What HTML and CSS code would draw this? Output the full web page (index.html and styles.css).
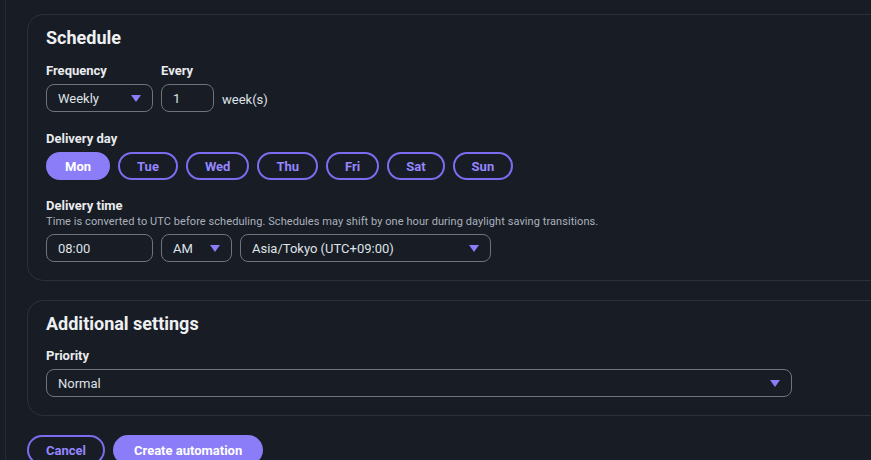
FILE: index.html
```html
<!DOCTYPE html>
<html lang="en">
<head>
<meta charset="utf-8">
<title>Create automation</title>
<link rel="stylesheet" href="styles.css">
</head>
<body>
<div class="shell">
  <main class="content">
    <section class="card">
      <h2 class="card-title">Schedule</h2>
      <div class="row">
        <div class="field">
          <label class="label">Frequency</label>
          <div class="select w-freq"><span>Weekly</span><span class="caret"></span></div>
        </div>
        <div class="field">
          <label class="label">Every</label>
          <div class="inline">
            <div class="input w-every">1</div>
            <span class="unit">week(s)</span>
          </div>
        </div>
      </div>

      <div class="field gap-day">
        <label class="label">Delivery day</label>
        <div class="days">
          <button class="day active">Mon</button>
          <button class="day">Tue</button>
          <button class="day">Wed</button>
          <button class="day">Thu</button>
          <button class="day">Fri</button>
          <button class="day">Sat</button>
          <button class="day">Sun</button>
        </div>
      </div>

      <div class="field gap-time">
        <label class="label">Delivery time</label>
        <p class="desc">Time is converted to UTC before scheduling. Schedules may shift by one hour during daylight saving transitions.</p>
        <div class="row">
          <div class="input w-time">08:00</div>
          <div class="select w-ampm"><span>AM</span><span class="caret"></span></div>
          <div class="select w-tz"><span>Asia/Tokyo (UTC+09:00)</span><span class="caret"></span></div>
        </div>
      </div>
    </section>

    <section class="card">
      <h2 class="card-title compact">Additional settings</h2>
      <div class="field">
        <label class="label">Priority</label>
        <div class="select w-priority"><span>Normal</span><span class="caret"></span></div>
      </div>
    </section>

    <div class="actions">
      <button class="btn btn-outline">Cancel</button>
      <button class="btn btn-primary">Create automation</button>
    </div>
  </main>
</div>
</body>
</html>
```

FILE: styles.css
```css
* { box-sizing: border-box; }

html, body {
  margin: 0;
  height: 100%;
  overflow: hidden;
}

body {
  background: #181c25;
  color: #e9ebed;
  font-family: Roboto, "Open Sans", sans-serif;
}

.shell {
  padding-left: 5px;
  height: 100%;
}

.content {
  border-left: 1px solid #252a34;
  height: 100%;
  padding: 14px 0 0 21px;
  width: 960px;
}

.card {
  border: 1px solid #2c303a;
  border-radius: 16px;
  padding: 11px 18px 18px;
  margin-bottom: 19px;
}

.card-title {
  margin: 0 0 12px;
  font-size: 18px;
  line-height: 24px;
  font-weight: 700;
  color: #eef0f2;
}

.card-title.compact { margin-bottom: 11px; }

.row {
  display: flex;
  gap: 8px;
  align-items: center;
}

.field {
  display: flex;
  flex-direction: column;
}

.gap-day { margin-top: 18px; }
.gap-time { margin-top: 17px; }

.label {
  font-size: 13px;
  line-height: 18px;
  font-weight: 700;
  color: #e9ebed;
  margin-bottom: 4px;
}

.desc {
  margin: -4px 0 5px;
  font-size: 11px;
  line-height: 14px;
  letter-spacing: 0.07px;
  color: #aab1bc;
}

.inline {
  display: flex;
  align-items: center;
  gap: 8px;
}

.unit {
  font-size: 13px;
  color: #dfe2e6;
  padding-top: 2px;
}

.select, .input {
  height: 28px;
  border: 1px solid #6f737c;
  border-radius: 8px;
  display: flex;
  align-items: center;
  justify-content: space-between;
  padding: 0 11px;
  font-size: 13px;
  color: #dfe2e6;
}

.caret {
  width: 0;
  height: 0;
  border-left: 5px solid transparent;
  border-right: 5px solid transparent;
  border-top: 7px solid #8b7df8;
}

.w-freq { width: 107px; }
.w-every { width: 53px; }
.w-time { width: 107px; }
.w-ampm { width: 71px; }
.w-tz { width: 251px; }
.w-priority { width: 746px; }

.days {
  display: flex;
  gap: 8px;
}

.day {
  height: 28px;
  padding: 0 17px;
  border-radius: 14px;
  border: 2px solid #7c6df0;
  background: transparent;
  color: #9486ff;
  font-family: inherit;
  font-size: 13px;
  font-weight: 700;
}

.day.active {
  background: #8b7df8;
  border-color: #8b7df8;
  color: #ffffff;
}

.actions {
  display: flex;
  gap: 8px;
}

.btn {
  height: 30px;
  border-radius: 15px;
  font-family: inherit;
  font-size: 13px;
  font-weight: 700;
  padding: 0 19px;
}

.btn-outline {
  background: transparent;
  border: 2px solid #7c6df0;
  color: #9486ff;
  padding: 0 17px;
}

.btn-primary {
  background: #8b7df8;
  border: 2px solid #8b7df8;
  color: #ffffff;
}
```
